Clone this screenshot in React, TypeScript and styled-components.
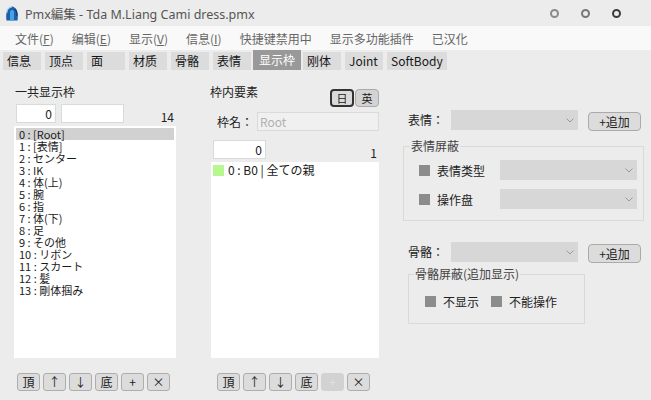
import React from "react";
import styled, { createGlobalStyle } from "styled-components";

const GlobalStyle = createGlobalStyle`
  html, body {
    margin: 0;
    padding: 0;
  }
  body {
    background: #ececec;
    font-family: "Noto Sans CJK JP", "Noto Sans", sans-serif;
    font-size: 12px;
    color: #1a1a1a;
  }
`;

const leftItems = [
  "0 : [Root]",
  "1 : [表情]",
  "2 : センター",
  "3 : IK",
  "4 : 体(上)",
  "5 : 腕",
  "6 : 指",
  "7 : 体(下)",
  "8 : 足",
  "9 : その他",
  "10 : リボン",
  "11 : スカート",
  "12 : 髪",
  "13 : 剛体掴み",
];

const tabs = ["信息", "顶点", "面", "材质", "骨骼", "表情", "显示枠", "刚体", "Joint", "SoftBody"];

const Chevron = () => (
  <svg width="8" height="5" viewBox="0 0 8 5">
    <polyline points="0.5,0.5 4,4 7.5,0.5" fill="none" stroke="#9a9a9a" strokeWidth="1" />
  </svg>
);

const AppIcon = () => (
  <svg width="16" height="16" viewBox="0 0 16 16">
    <path d="M2.5 15.5 C1.5 9 2.5 2.5 8 1.5 C13.5 2.5 14.5 9 13.5 15.5 Z" fill="#1c5ea9" />
    <path d="M6 15.5 L6 6.5 C7 4.5 9 4.5 10 6.5 L10 15.5 Z" fill="#47a2e4" />
    <path d="M2.8 8 C2.8 4.5 4.8 2.2 8 1.8" stroke="#a8d6f7" strokeWidth="1.2" fill="none" />
    <path d="M11 4 C12.5 5.5 13 8 13 11" stroke="#0f3c75" strokeWidth="1.2" fill="none" />
  </svg>
);

const ToolButtons = ({ plusDisabled }: { plusDisabled?: boolean }) => (
  <ButtonRow>
    <SmallButton>頂</SmallButton>
    <SmallButton>↑</SmallButton>
    <SmallButton>↓</SmallButton>
    <SmallButton>底</SmallButton>
    <SmallButton disabled={plusDisabled}>+</SmallButton>
    <SmallButton>×</SmallButton>
  </ButtonRow>
);

const App = (): JSX.Element => {
  return (
    <Window>
      <GlobalStyle />
      <TitleBar>
        <AppIcon />
        <TitleText>Pmx編集 - Tda M.Liang Cami dress.pmx</TitleText>
        <Controls>
          <ControlDot color="#8a8a8a" />
          <ControlDot color="#777777" />
          <ControlDot color="#3c3c3c" />
        </Controls>
      </TitleBar>

      <MenuBar>
        <MenuItem>文件(<u>F</u>)</MenuItem>
        <MenuItem>编辑(<u>E</u>)</MenuItem>
        <MenuItem>显示(<u>V</u>)</MenuItem>
        <MenuItem>信息(<u>I</u>)</MenuItem>
        <MenuItem>快捷键禁用中</MenuItem>
        <MenuItem>显示多功能插件</MenuItem>
        <MenuItem>已汉化</MenuItem>
      </MenuBar>

      <TabBar>
        {tabs.map((t) => (
          <Tab key={t} active={t === "显示枠"}>
            {t}
          </Tab>
        ))}
      </TabBar>

      <Content>
        <LeftColumn>
          <SectionLabel>一共显示枠</SectionLabel>
          <CountRow>
            <NumberBox width={40}>0</NumberBox>
            <NumberBox width={63} gap={5}></NumberBox>
            <Count>14</Count>
          </CountRow>
          <ListBox height={232}>
            {leftItems.map((item, i) => (
              <ListRow key={item} selected={i === 0}>
                {item}
              </ListRow>
            ))}
          </ListBox>
          <ToolButtons />
        </LeftColumn>

        <MiddleColumn>
          <Header>
            <SectionLabel>枠内要素</SectionLabel>
            <LangGroup>
              <LangButton active>日</LangButton>
              <LangButton>英</LangButton>
            </LangGroup>
          </Header>
          <NameRow>
            <NameLabel>枠名：</NameLabel>
            <NameBox>Root</NameBox>
          </NameRow>
          <CountRow top={9}>
            <NumberBox width={53}>0</NumberBox>
            <Count>1</Count>
          </CountRow>
          <ListBox height={196}>
            <ElementRow>
              <GreenMark />
              <span>0 : B0 | 全ての親</span>
            </ElementRow>
          </ListBox>
          <ToolButtons plusDisabled />
        </MiddleColumn>

        <RightColumn>
          <FieldRow top={40}>
            <FieldLabel>表情：</FieldLabel>
            <Select width={127}>
              <Chevron />
            </Select>
            <AddButton>+追加</AddButton>
          </FieldRow>

          <GroupBox width={241} left={8} top={8} pad="7px 5px 11px 6px">
            <Legend>表情屏蔽</Legend>
            <GroupRow indent={9}>
              <Mark />
              <OptionLabel width={63}>表情类型</OptionLabel>
              <Select width={137}>
                <Chevron />
              </Select>
            </GroupRow>
            <GroupRow indent={9} top={9}>
              <Mark />
              <OptionLabel width={63}>操作盘</OptionLabel>
              <Select width={137}>
                <Chevron />
              </Select>
            </GroupRow>
          </GroupBox>

          <FieldRow top={21}>
            <FieldLabel>骨骼：</FieldLabel>
            <Select width={127}>
              <Chevron />
            </Select>
            <AddButton>+追加</AddButton>
          </FieldRow>

          <GroupBox width={177} left={13} top={4} pad="10px 5px 12px 5px">
            <Legend>骨骼屏蔽(追加显示)</Legend>
            <GroupRow indent={11}>
              <Mark />
              <OptionLabel>不显示</OptionLabel>
              <Mark gap={12} />
              <OptionLabel>不能操作</OptionLabel>
            </GroupRow>
          </GroupBox>
        </RightColumn>
      </Content>
    </Window>
  );
};

export default App;

const Window = styled.div`
  width: 651px;
  height: 400px;
  display: flex;
  flex-direction: column;
  overflow: hidden;
  background: #ececec;
`;

const TitleBar = styled.div`
  height: 26px;
  flex: 0 0 26px;
  display: flex;
  align-items: center;
  padding-left: 4px;
  background: #ececec;
`;

const TitleText = styled.span`
  margin-left: 5px;
  font-family: "Noto Sans", "Noto Sans CJK JP", sans-serif;
  font-size: 12.5px;
  color: #555;
`;

const Controls = styled.div`
  margin-left: auto;
  margin-right: 30px;
  display: flex;
  gap: 22px;
`;

const ControlDot = styled.span<{ color: string }>`
  width: 9px;
  height: 9px;
  box-sizing: border-box;
  border-radius: 50%;
  border: 2px solid ${({ color }) => color};
`;

const MenuBar = styled.div`
  height: 24px;
  flex: 0 0 24px;
  display: flex;
  align-items: center;
  gap: 18px;
  padding-left: 15px;
  background: #f9f9f9;
`;

const MenuItem = styled.span`
  color: #666;
  font-size: 12px;
  white-space: nowrap;

  u {
    text-underline-offset: 1px;
  }
`;

const TabBar = styled.div`
  height: 20px;
  flex: 0 0 20px;
  display: flex;
  align-items: flex-end;
  gap: 4px;
  padding-left: 3px;
`;

const Tab = styled.div<{ active?: boolean }>`
  box-sizing: border-box;
  min-width: 38px;
  height: ${({ active }) => (active ? 20 : 18)}px;
  line-height: ${({ active }) => (active ? 20 : 18)}px;
  padding: 0 ${({ active }) => (active ? 6 : 4)}px;
  margin: 0 ${({ active }) => (active ? -2 : 0)}px;
  background: ${({ active }) => (active ? "#999999" : "#dcdcdc")};
  color: ${({ active }) => (active ? "#ffffff" : "#161616")};
  font-size: 12px;
  white-space: nowrap;
`;

const Content = styled.div`
  flex: 1;
  display: flex;
  align-items: flex-start;
`;

const LeftColumn = styled.div`
  width: 162px;
  margin-left: 14px;
  display: flex;
  flex-direction: column;
`;

const MiddleColumn = styled.div`
  width: 168px;
  margin-left: 35px;
  display: flex;
  flex-direction: column;
`;

const RightColumn = styled.div`
  flex: 1;
  margin-left: 16px;
  display: flex;
  flex-direction: column;
`;

const SectionLabel = styled.div`
  margin-top: 14px;
  height: 16px;
  line-height: 16px;
  padding-left: 1px;
  font-size: 12px;
  color: #222;
`;

const CountRow = styled.div<{ top?: number }>`
  margin-top: ${({ top }) => top ?? 4}px;
  height: 19px;
  display: flex;
  align-items: flex-end;
  padding-left: 2px;
`;

const NumberBox = styled.div<{ width: number; gap?: number }>`
  box-sizing: border-box;
  width: ${({ width }) => width}px;
  height: 19px;
  margin-left: ${({ gap }) => gap ?? 0}px;
  align-self: flex-start;
  background: #fff;
  border: 1px solid #dadada;
  text-align: right;
  padding-right: 3px;
  line-height: 17px;
  font-size: 12px;
`;

const Count = styled.span`
  margin-left: auto;
  padding-right: 2px;
  line-height: 13px;
  font-size: 12px;
  color: #222;
`;

const ListBox = styled.div<{ height: number }>`
  box-sizing: border-box;
  margin-top: 3px;
  height: ${({ height }) => height}px;
  padding: 2px;
  background: #fff;
`;

const ListRow = styled.div<{ selected?: boolean }>`
  height: 12px;
  line-height: 12px;
  padding-left: 3px;
  font-size: 11px;
  white-space: nowrap;
  background: ${({ selected }) => (selected ? "#d1d1d1" : "transparent")};
`;

const ElementRow = styled.div`
  height: 12px;
  line-height: 12px;
  display: flex;
  align-items: center;
  gap: 4px;
  font-size: 12px;
  white-space: nowrap;
`;

const GreenMark = styled.span`
  width: 11px;
  height: 11px;
  background: #b7f78f;
`;

const ButtonRow = styled.div`
  margin-top: 15px;
  display: flex;
  gap: 3px;
  padding-left: 3px;

  ${MiddleColumn} & {
    padding-left: 6px;
  }
`;

const SmallButton = styled.button<{ disabled?: boolean }>`
  box-sizing: border-box;
  width: 23px;
  height: 18px;
  padding: 0;
  border-radius: 3px;
  border: 1px solid ${({ disabled }) => (disabled ? "#d2d2d2" : "#adadad")};
  background: ${({ disabled }) => (disabled ? "#d2d2d2" : "#dcdcdc")};
  color: ${({ disabled }) => (disabled ? "#e2e2e2" : "#222")};
  font-family: "Noto Sans CJK JP", "Noto Sans", sans-serif;
  font-size: 12px;
  line-height: 16px;
`;

const Header = styled.div`
  display: flex;
  height: 24px;

  ${SectionLabel} {
    margin-left: -2px;
  }
`;

const LangGroup = styled.div`
  margin-left: auto;
  margin-top: 19px;
  display: flex;
  gap: 1px;
`;

const LangButton = styled.div<{ active?: boolean }>`
  box-sizing: border-box;
  width: 24px;
  height: 18px;
  border-radius: 4px;
  border: ${({ active }) => (active ? "2px solid #333" : "1px solid #aaa")};
  background: ${({ active }) => (active ? "#dadada" : "#d3d3d3")};
  display: flex;
  align-items: center;
  justify-content: center;
  font-size: 11px;
`;

const NameRow = styled.div`
  margin-top: 18px;
  height: 19px;
  display: flex;
  align-items: center;
  padding-left: 6px;
`;

const NameLabel = styled.span`
  width: 40px;
  font-size: 12px;
  color: #222;
`;

const NameBox = styled.div`
  box-sizing: border-box;
  width: 122px;
  height: 19px;
  line-height: 17px;
  padding-left: 2px;
  background: #f0f0f0;
  border: 1px solid #dadada;
  color: #b0b0b0;
  font-size: 12px;
`;

const FieldRow = styled.div<{ top: number }>`
  margin-top: ${({ top }) => top}px;
  height: 21px;
  display: flex;
  align-items: flex-start;
  padding-left: 13px;
`;

const FieldLabel = styled.span`
  width: 43px;
  line-height: 20px;
  font-size: 12px;
  color: #222;
`;

const Select = styled.div<{ width: number }>`
  box-sizing: border-box;
  width: ${({ width }) => width}px;
  height: 20px;
  background: #d7d7d7;
  display: flex;
  align-items: center;
  justify-content: flex-end;
  padding-right: 4px;
`;

const AddButton = styled.div`
  box-sizing: border-box;
  margin-left: 10px;
  margin-top: 2px;
  width: 53px;
  height: 19px;
  border: 1px solid #aaa;
  border-radius: 4px;
  background: #dcdcdc;
  display: flex;
  align-items: center;
  justify-content: center;
  font-size: 12px;
  color: #222;
`;

const GroupBox = styled.fieldset<{ width: number; left: number; top: number; pad: string }>`
  box-sizing: border-box;
  width: ${({ width }) => width}px;
  margin: ${({ top }) => top}px 0 0 ${({ left }) => left}px;
  padding: ${({ pad }) => pad};
  border: 1px solid #d9d9d9;
  min-inline-size: 0;
`;

const Legend = styled.legend`
  padding: 0 1px;
  line-height: 14px;
  font-size: 12px;
  color: #444;
`;

const GroupRow = styled.div<{ indent: number; top?: number }>`
  margin-left: ${({ indent }) => indent}px;
  margin-top: ${({ top }) => top ?? 0}px;
  height: 20px;
  display: flex;
  align-items: center;
`;

const Mark = styled.span<{ gap?: number }>`
  width: 11px;
  height: 11px;
  margin-left: ${({ gap }) => gap ?? 0}px;
  background: #8c8c8c;
`;

const OptionLabel = styled.span<{ width?: number }>`
  margin-left: 7px;
  ${({ width }) => (width ? `width: ${width}px;` : "")}
  font-size: 12px;
  color: #222;
  white-space: nowrap;
`;
